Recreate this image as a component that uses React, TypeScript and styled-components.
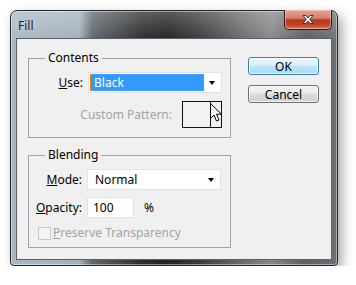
import React from 'react'
import styled, { createGlobalStyle } from 'styled-components'

const GlobalStyle = createGlobalStyle`
  html, body {
    margin: 0;
    padding: 0;
    background: #fff;
  }
  body {
    font-family: "Noto Sans", "Liberation Sans", sans-serif;
    font-size: 12px;
    color: #000;
  }
`

const Window = styled.div`
  margin: 10px 0 0 10px;
  width: 328px;
  height: 256px;
  box-sizing: border-box;
  padding: 0 5px 5px 5px;
  display: flex;
  flex-direction: column;
  border: 1px solid #1e262e;
  border-radius: 7px 7px 4px 4px;
  background:
    linear-gradient(180deg, rgba(255, 255, 255, 0.25) 0%, rgba(255, 255, 255, 0) 12%),
    linear-gradient(90deg, #aab7c2 0%, #a4b1bb 21%, #5f656c 25%, #2c2d2f 40%, #222 48%, #3b3c3e 58%, #6e6f71 72%, #858789 80%, #5c5e61 90%, #6b7176 100%);
  box-shadow: inset 0 0 0 1px rgba(255, 255, 255, 0.45), 4px 5px 12px rgba(0, 0, 0, 0.35);
`

const TitleBar = styled.div`
  height: 27px;
  flex: none;
  display: flex;
  justify-content: space-between;
  align-items: flex-start;
`

const Title = styled.span`
  margin: 7px 0 0 2px;
  line-height: 16px;
  color: #1a1a1a;
  text-shadow: 0 0 6px rgba(255, 255, 255, 0.7);
`

const CloseButton = styled.div`
  width: 48px;
  height: 20px;
  margin-top: -1px;
  box-sizing: border-box;
  display: flex;
  align-items: center;
  justify-content: center;
  border: 1px solid #3b1410;
  border-top: none;
  border-radius: 0 0 5px 5px;
  background: linear-gradient(180deg, #e6a394 0%, #d5846f 40%, #b8361c 55%, #c2452a 80%, #dc7a5e 100%);
  box-shadow: inset 0 0 0 1px rgba(255, 220, 210, 0.5);
`

const Client = styled.div`
  flex: 1;
  min-height: 0;
  display: flex;
  align-items: flex-start;
  gap: 17px;
  padding: 11px;
  border: 1px solid #57616b;
  background: #f0f0f0;
`

const LeftColumn = styled.div`
  width: 203px;
  display: flex;
  flex-direction: column;
  gap: 9px;
`

const Group = styled.fieldset<{ $top: number; $bottom: number }>`
  margin: 0;
  min-width: 0;
  padding: ${({ $top }) => $top}px 0 ${({ $bottom }) => $bottom}px 0;
  border: 1px solid #a2a2a2;
  display: flex;
  flex-direction: column;
  gap: 7px;
`

const Legend = styled.legend`
  margin-left: 16px;
  padding: 0 3px;
  height: 16px;
  line-height: 16px;
`

const Row = styled.div<{ $end?: boolean }>`
  display: flex;
  align-items: center;
  gap: ${({ $end }) => ($end ? 10 : 5)}px;
  margin-top: ${({ $end }) => ($end ? 1 : 0)}px;
  justify-content: ${({ $end }) => ($end ? 'flex-end' : 'flex-start')};
  padding-right: ${({ $end }) => ($end ? 8 : 0)}px;
`

const Label = styled.span<{ $w: number; $disabled?: boolean }>`
  width: ${({ $w }) => $w}px;
  text-align: right;
  line-height: 16px;
  color: ${({ $disabled }) => ($disabled ? '#a3a3a3' : '#000')};
`

const Key = styled.span`
  text-decoration: underline;
`

const Select = styled.div`
  width: 134px;
  height: 21px;
  box-sizing: border-box;
  padding: 1px 6px 1px 1px;
  display: flex;
  align-items: center;
  justify-content: space-between;
  background: #fff;
  border: 1px solid #e2e2e2;
`

const SelectValue = styled.span<{ $active?: boolean }>`
  flex: 0 0 ${({ $active }) => ($active ? '114px' : 'auto')};
  height: 17px;
  box-sizing: border-box;
  padding-left: ${({ $active }) => ($active ? 3 : 5)}px;
  line-height: 15px;
  color: ${({ $active }) => ($active ? '#fff' : '#000')};
  background: ${({ $active }) => ($active ? '#3399ff' : 'transparent')};
  border: 1px ${({ $active }) => ($active ? 'dotted #1d1200' : 'solid transparent')};
  outline: ${({ $active }) => ($active ? '1px dotted #e88a00' : 'none')};
  outline-offset: -1px;
`

const Arrow = styled.span`
  width: 0;
  height: 0;
  border-left: 3.5px solid transparent;
  border-right: 3.5px solid transparent;
  border-top: 4px solid #000;
`

const Swatch = styled.div`
  width: 40px;
  height: 27px;
  box-sizing: border-box;
  display: flex;
  border: 1px solid #111;
  background: #f2f2f2;
`

const SwatchMain = styled.div`
  width: 27px;
  border-right: 1px solid #111;
`

const SwatchSide = styled.div`
  flex: 1;
  position: relative;
`

const Cursor = styled.svg`
  position: absolute;
  left: -1px;
  top: 1px;
`

const Input = styled.div`
  width: 47px;
  height: 21px;
  box-sizing: border-box;
  padding-left: 5px;
  line-height: 19px;
  background: #fff;
  border: 1px solid #e2e2e2;
`

const Percent = styled.span`
  margin-left: 5px;
  line-height: 16px;
`

const CheckRow = styled.div`
  display: flex;
  align-items: center;
  gap: 2px;
  padding-left: 9px;
  height: 16px;
  line-height: 16px;
  color: #a3a3a3;
`

const CheckBox = styled.span`
  width: 13px;
  height: 13px;
  box-sizing: border-box;
  border: 1px solid #c8c8c8;
  background: #f4f4f4;
`

const RightColumn = styled.div`
  padding-top: 7px;
  display: flex;
  flex-direction: column;
  gap: 10px;
`

const Button = styled.div<{ $default?: boolean }>`
  width: 71px;
  height: 18px;
  box-sizing: border-box;
  display: flex;
  align-items: center;
  justify-content: center;
  border: 1px solid ${({ $default }) => ($default ? '#3c7fb1' : '#707070')};
  border-radius: 3px;
  background: ${({ $default }) =>
    $default
      ? 'linear-gradient(180deg, #eaf6fd 0%, #d9f0fc 45%, #bee6fd 50%, #a7d9f5 100%)'
      : 'linear-gradient(180deg, #f2f2f2 0%, #ebebeb 45%, #dddddd 50%, #cfcfcf 100%)'};
  box-shadow: inset 0 0 0 1px rgba(255, 255, 255, 0.7);
`

export default function App() {
  return (
    <>
      <GlobalStyle />
      <Window>
        <TitleBar>
          <Title>Fill</Title>
          <CloseButton>
            <svg width="14" height="11" viewBox="0 0 14 11">
              <path
                d="M2 1.5 L5 1.5 L7 4 L9 1.5 L12 1.5 L8.6 5.5 L12 9.5 L9 9.5 L7 7 L5 9.5 L2 9.5 L5.4 5.5 Z"
                fill="#fff"
                stroke="#3a3a3a"
                strokeWidth="1"
                strokeLinejoin="round"
              />
            </svg>
          </CloseButton>
        </TitleBar>
        <Client>
          <LeftColumn>
            <Group $top={6} $bottom={9}>
              <Legend>Contents</Legend>
              <Row>
                <Label $w={54}><Key>U</Key>se:</Label>
                <Select>
                  <SelectValue $active>Black</SelectValue>
                  <Arrow />
                </Select>
              </Row>
              <Row $end>
                <Label $w={100} $disabled>Custom Pattern:</Label>
                <Swatch>
                  <SwatchMain />
                  <SwatchSide>
                    <Cursor width="13" height="20" viewBox="0 0 13 20">
                      <path
                        d="M0.5 0.5 L0.5 15.5 L4 12 L6.5 18 L9 17 L6.5 11.2 L11.5 11.2 Z"
                        fill="#fff"
                        stroke="#000"
                        strokeWidth="1"
                      />
                    </Cursor>
                  </SwatchSide>
                </Swatch>
              </Row>
            </Group>
            <Group $top={6} $bottom={6}>
              <Legend>Blending</Legend>
              <Row>
                <Label $w={53}><Key>M</Key>ode:</Label>
                <Select>
                  <SelectValue>Normal</SelectValue>
                  <Arrow />
                </Select>
              </Row>
              <Row>
                <Label $w={53}><Key>O</Key>pacity:</Label>
                <Input>100</Input>
                <Percent>%</Percent>
              </Row>
              <CheckRow>
                <CheckBox />
                <span><Key>P</Key>reserve Transparency</span>
              </CheckRow>
            </Group>
          </LeftColumn>
          <RightColumn>
            <Button $default>OK</Button>
            <Button>Cancel</Button>
          </RightColumn>
        </Client>
      </Window>
    </>
  )
}
